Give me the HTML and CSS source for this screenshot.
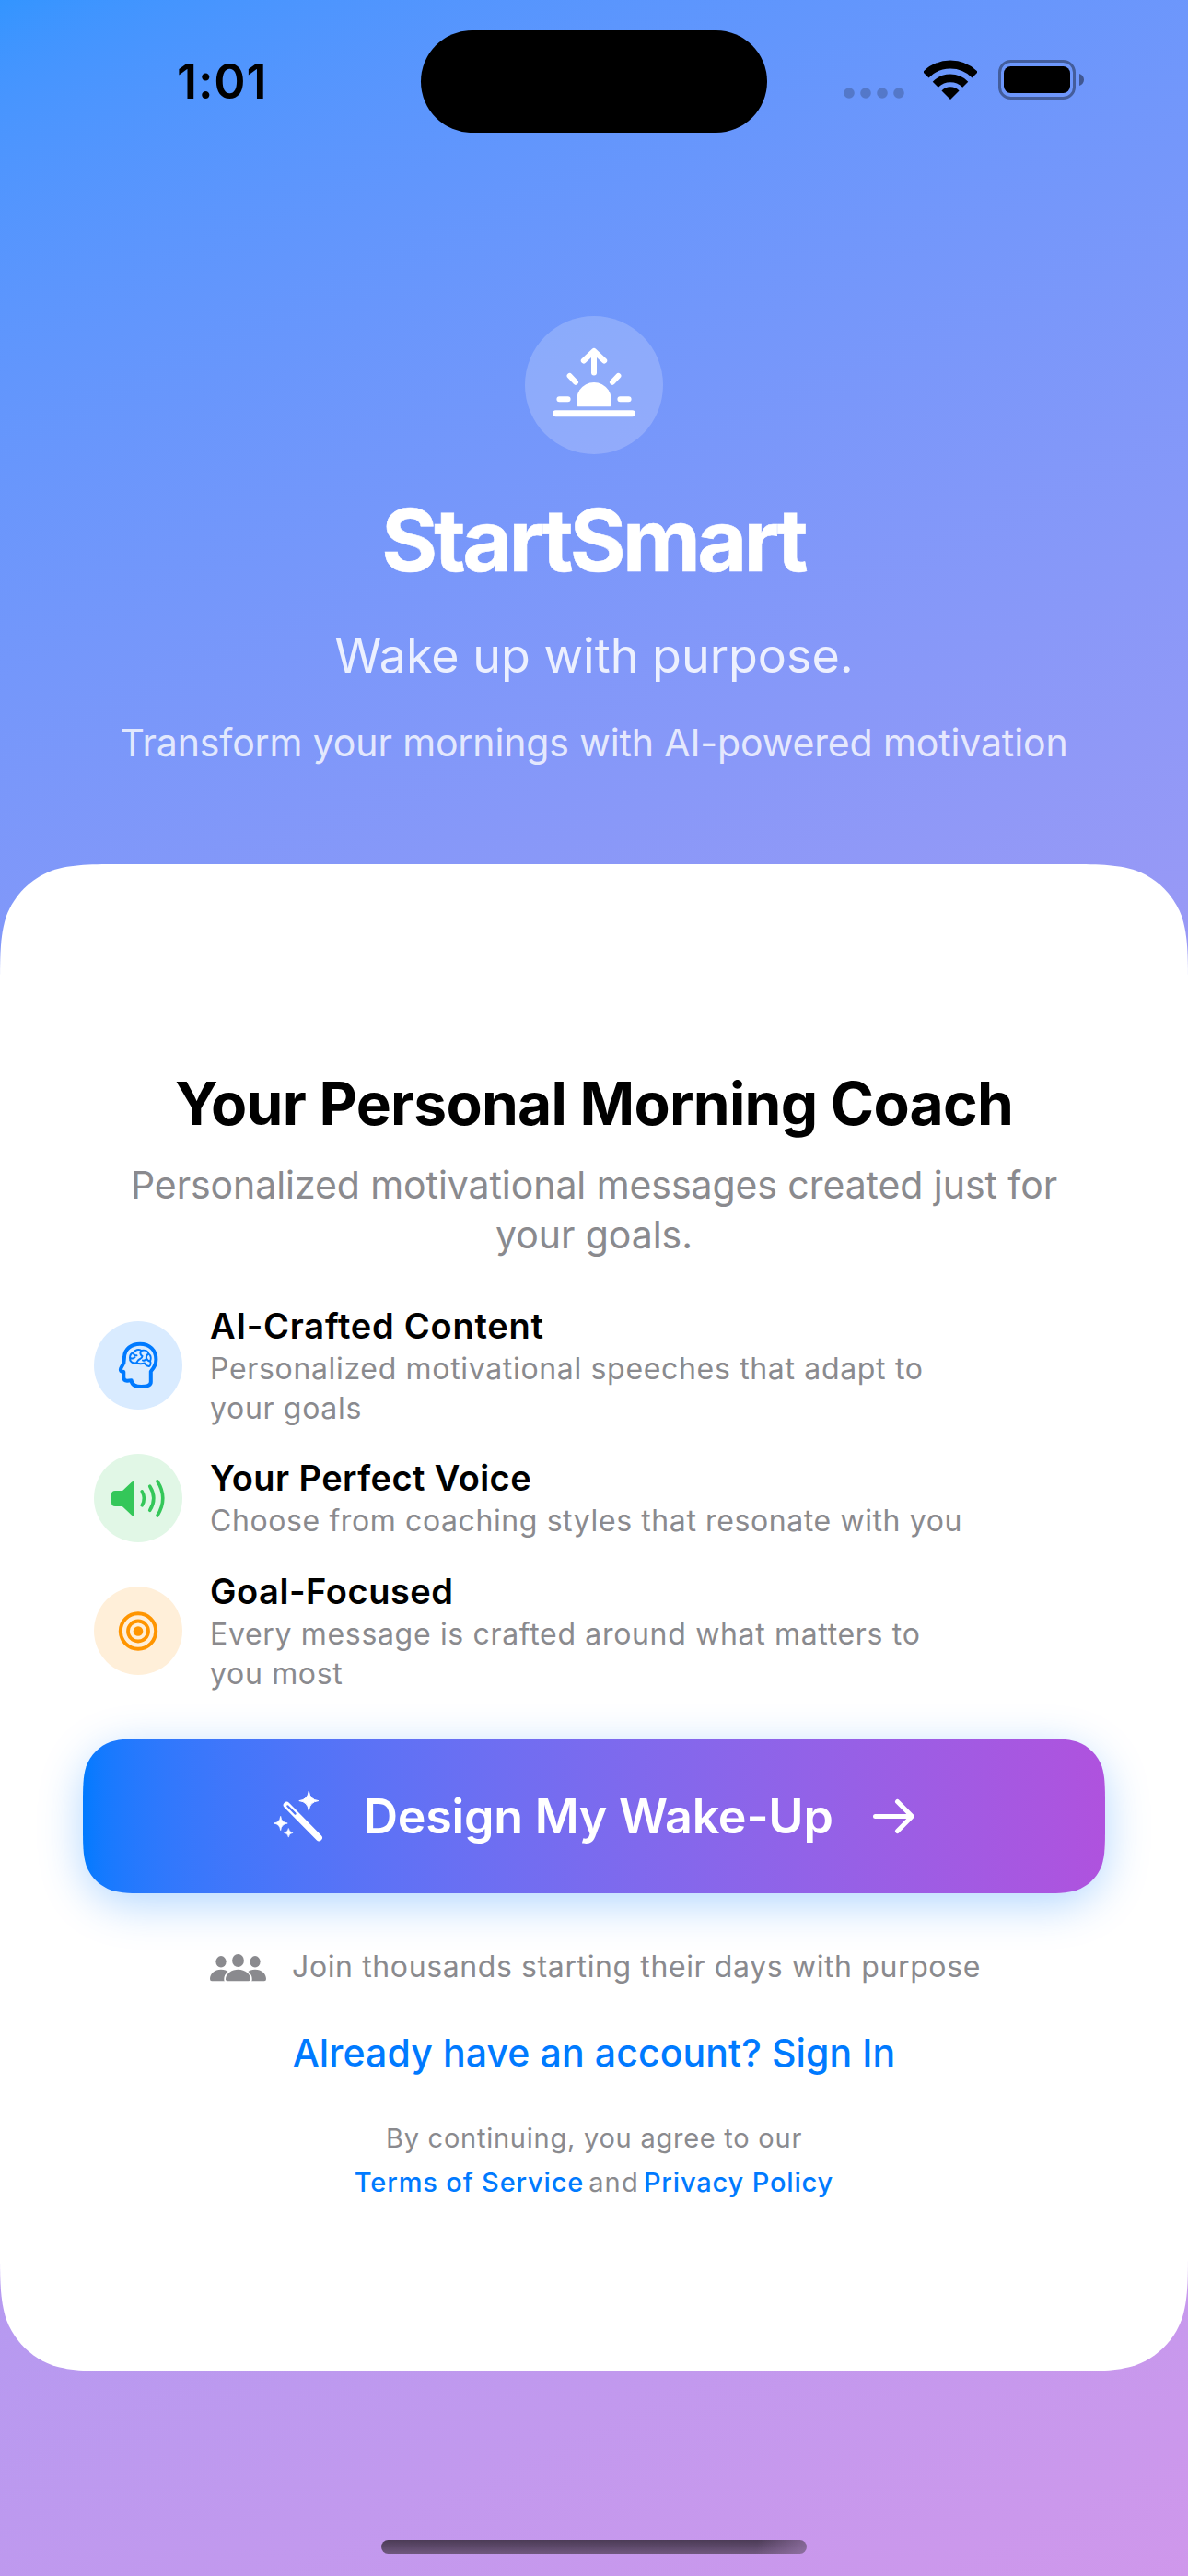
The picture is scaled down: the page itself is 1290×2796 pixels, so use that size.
FILE: index.html
```html
<!DOCTYPE html>
<html lang="en">
<head>
<meta charset="utf-8">
<title>StartSmart</title>
<link rel="stylesheet" href="styles.css">
</head>
<body>
<div class="screen">
  <header class="status">
    <div class="status-time">1:01</div>
    <div class="island"></div>
    <div class="status-icons">
      <svg class="dots" width="66" height="12" viewBox="0 0 66 12" fill="#000" fill-opacity=".2"><circle cx="6" cy="6" r="5.8"/><circle cx="24" cy="6" r="5.8"/><circle cx="42" cy="6" r="5.8"/><circle cx="60" cy="6" r="5.8"/></svg>
      <svg class="wifi" width="58" height="43" viewBox="0 0 58 43">
        <clipPath id="fan"><path d="M29 43L-2 12V-2H60V12Z"/></clipPath>
        <g clip-path="url(#fan)" fill="none" stroke="#000"><circle cx="29" cy="42.5" r="37.4" stroke-width="9"/><circle cx="29" cy="42.5" r="22.6" stroke-width="8.6"/><circle cx="29" cy="42.5" r="6.6" stroke-width="13.2"/></g>
      </svg>
      <svg class="battery" width="94" height="43" viewBox="0 0 94 43">
        <rect x="1.5" y="1.5" width="81" height="40" rx="12" fill="none" stroke="#000" stroke-opacity=".38" stroke-width="3"/>
        <rect x="6" y="7" width="72" height="29" rx="7.5"/>
        <path d="M88 15c3.200 1 5 3.600 5 6.500s-1.800 5.500-5 6.500z" fill-opacity=".42"/>
      </svg>
    </div>
  </header>

  <section class="hero">
    <div class="logo">
      <svg width="150" height="150" viewBox="0 0 150 150" fill="none" stroke="#fff" stroke-width="6" stroke-linecap="round" stroke-linejoin="round">
        <path d="M75 38.500V61.500M63.800 48.500L75 38L86.200 48.500M48.600 65L55 71.700M101.400 65L95 71.700M37.400 90.300H46.600M103.400 90.300H112.600"/>
        <path d="M33.500 105.800H116.500" stroke-width="7"/>
        <path d="M57.200 98.300A19 19.500 0 1 1 92.800 98.300Z" fill="#fff" stroke="none"/>
      </svg>
    </div>
    <h1 class="brand">StartSmart</h1>
    <p class="tagline">Wake up with purpose.</p>
    <p class="lead">Transform your mornings with AI-powered motivation</p>
  </section>

  <main class="card">
    <h2 class="card-title">Your Personal Morning Coach</h2>
    <p class="card-sub">Personalized motivational messages created just for<br>your goals.</p>

    <ul class="features">
      <li class="feature">
        <div class="badge badge-blue">
          <svg width="96" height="96" viewBox="0 0 96 96" fill="none" stroke="#007aff" stroke-linecap="round" stroke-linejoin="round">
            <path stroke-width="4" d="M33 39C33.300 30.500 40.500 24.700 50 24.700C60.500 24.700 67.400 31.500 67.400 41.500C67.400 47.500 65.500 50.500 61.800 54.500V66C61.800 70 57 71 51.500 71C45 71 41 69.500 40.700 64.300L36 64.700C33.500 64.700 32.300 63.500 32.300 61V55L30.200 54.500C28.800 54 28.600 52.600 29.200 51.200L32.400 45.200Z"/>
            <path stroke-width="2" d="M46 45.300C41.500 46 38.600 43.500 39 39.500C39.200 36.500 40.500 34.800 42.800 34.300C44.500 31 48.500 30 51.500 32C55.500 31 58.500 32.500 59.300 35.300C62 37.500 62.300 41 61 43.500C62 45.500 61.500 48 60 49C57 48.600 55.500 47 55 45.500C52 46.500 48.500 46.300 46 45.300ZM42.800 34.300C43 36.500 44.500 37.600 46.500 37.300M40 40.200C42 41 43.500 40.500 44.500 39.200M51.500 32C49.500 34.500 50.500 37 52.500 38C52.500 40.500 49.500 41 48 42.500L46 45.300M59.300 35.300C57.500 36.500 56.500 38.500 57 40.500C56.800 42 54.500 43 53 42.600M57 40.500C58 42.500 59.500 43.400 61 43.500"/>
          </svg>
        </div>
        <div class="feature-text"><h3>AI-Crafted Content</h3><p>Personalized motivational speeches that adapt to<br>your goals</p></div>
      </li>
      <li class="feature">
        <div class="badge badge-green">
          <svg width="96" height="96" viewBox="0 0 96 96" fill="none" stroke="#34c759" stroke-width="3.600" stroke-linecap="round">
            <path fill="#34c759" stroke="none" d="M23 40H30.200Q31 40 31.600 39.400L40.600 31Q42.300 29.600 43.300 30.300Q44 30.900 44 32.500V64.700Q44 66.500 43.100 67Q42 67.500 40.600 66.300L31.600 57.700Q31 57 30.200 57H23Q19 57 19 53V44Q19 40 23 40Z"/>
            <path d="M52.200 40.800Q56.600 48.200 52.200 55.800M60.700 35.200Q69 48.200 60.700 61.300M68.900 29.800Q80.700 48.200 68.900 67"/>
          </svg>
        </div>
        <div class="feature-text voice"><h3>Your Perfect Voice</h3><p>Choose from coaching styles that resonate with you</p></div>
      </li>
      <li class="feature">
        <div class="badge badge-orange">
          <svg width="96" height="96" viewBox="0 0 96 96" fill="none" stroke="#ff9500">
            <circle cx="48" cy="48.500" r="19.200" stroke-width="4"/><circle cx="48" cy="48.500" r="11" stroke-width="3.800"/><circle cx="48" cy="48.500" r="5.300" fill="#ff9500" stroke="none"/>
          </svg>
        </div>
        <div class="feature-text goal"><h3>Goal-Focused</h3><p>Every message is crafted around what matters to<br>you most</p></div>
      </li>
    </ul>

    <a class="cta" href="#">
      <svg width="54" height="56" viewBox="0 0 54 56">
        <path d="M14.300 16.300L49.300 51.800" stroke="#fff" stroke-width="7.200" stroke-linecap="round"/>
        <path d="M15.300 17.300L23.600 25.600" stroke="#4f74f8" stroke-width="2.200" stroke-linecap="round"/>
        <g fill="#fff">
          <path d="M38.300 1Q39.400 10.600 48.800 11.600Q39.400 12.600 38.300 22.200Q37.200 12.600 27.800 11.600Q37.200 10.600 38.300 1Z" stroke="#fff" stroke-linejoin="round"/>
          <path d="M7.700 28.400Q8.500 35.200 15.200 36Q8.500 36.800 7.700 43.600Q6.900 36.800 .2 36Q6.900 35.200 7.700 28.400Z" stroke="#fff" stroke-width=".8"/>
          <path d="M16.300 41.500Q16.900 45.700 21.100 46.300Q16.900 46.900 16.300 51.100Q15.700 46.900 11.500 46.300Q15.700 45.700 16.300 41.500Z" stroke="#fff" stroke-width=".6"/>
        </g>
      </svg>
      <span>Design My Wake-Up</span>
      <svg width="45" height="40" viewBox="0 0 45 40" fill="none" stroke="#fff" stroke-width="5" stroke-linecap="round" stroke-linejoin="round"><path d="M2.500 20.500H42M26.500 4.500L42.300 20.500L26.500 36.500"/></svg>
    </a>

    <div class="social">
      <svg width="61" height="31" viewBox="0 0 61 31" fill="#8a8a8e">
        <ellipse cx="12" cy="9.300" rx="5.600" ry="6.200"/><ellipse cx="49" cy="9.300" rx="5.600" ry="6.200"/><ellipse cx="30.500" cy="8" rx="6.400" ry="7.100"/>
        <path d="M0 28C0 22.500 5 17.800 12 17.800S24 22.500 24 28Q24 30.200 22 30.200H2Q0 30.200 0 28ZM37 28C37 22.500 42 17.800 49 17.800S61 22.500 61 28Q61 30.200 59 30.200H39Q37 30.200 37 28Z"/>
        <path d="M17 28.200C17 23 22.500 17.800 30.500 17.800S44 23 44 28.200Q44 30.200 42 30.200H19Q17 30.200 17 28.200Z" stroke="#fff" stroke-width="3.500" paint-order="stroke"/>
      </svg>
      <span>Join thousands starting their days with purpose</span>
    </div>

    <a class="signin" href="#">Already have an account? Sign In</a>
    <p class="legal">By continuing, you agree to our</p>
    <div class="legal-links"><a href="#">Terms of Service</a><span>and</span><a href="#">Privacy Policy</a></div>
  </main>

  <div class="home-indicator"></div>
</div>
</body>
</html>
```
FILE: styles.css
```css
* { box-sizing: border-box; margin: 0; padding: 0; }

body { font-family: Inter, "Liberation Sans", sans-serif; background: #fff; }
a { text-decoration: none; }
svg { display: block; flex: none; }

.screen {
  width: 1290px;
  height: 2796px;
  overflow: hidden;
  background: linear-gradient(155.23deg in oklab, rgba(0, 122, 255, .8), rgba(175, 82, 222, .6));
}

/* status bar */
.status {
  display: grid;
  grid-template-columns: 457px 376px 1fr;
  height: 144px;
  padding-top: 33px;
}
.status-time {
  padding-left: 192px;
  font-size: 52px;
  font-weight: 600;
  line-height: 111px;
  letter-spacing: .9px;
}
.island { height: 111px; border-radius: 56px; background: #000; }
.status-icons { display: flex; padding: 32px 0 0 83px; }
.dots { margin: 30px 21px 0 0; }
.wifi { margin-right: 23px; }

/* hero */
.hero {
  display: flex;
  flex-direction: column;
  align-items: center;
  height: 794px;
  padding-top: 199px;
  color: #fff;
}
.logo { border-radius: 50%; background: rgba(255, 255, 255, .2); }
.brand {
  margin-top: 37px;
  font-size: 93px;
  font-weight: 700;
  line-height: 112px;
  letter-spacing: -3.7px;
  padding-right: 2px;
  -webkit-text-stroke: .6px #fff;
}
.tagline {
  margin-top: 38px;
  font-size: 52px;
  line-height: 64px;
  color: rgba(255, 255, 255, .85);
}
.lead {
  margin-top: 37px;
  font-size: 41px;
  line-height: 50px;
  letter-spacing: -.13px;
  color: rgba(255, 255, 255, .8);
}

/* white panel with continuous corners */
.card {
  display: flex;
  flex-direction: column;
  align-items: center;
  height: 1636px;
  padding: 221px 90px 0;
  background: #fff;
  clip-path: path("M137.600 0H1152.400C1192 0 1211.800 0 1233.200 6.700C1256.400 15.200 1274.800 33.600 1283.300 56.800C1290 78.200 1290 98 1290 137.600V1498.400C1290 1538 1290 1557.800 1283.300 1579.200C1274.800 1602.400 1256.400 1620.800 1233.200 1629.300C1211.800 1636 1192 1636 1152.400 1636H137.600C98 1636 78.200 1636 56.800 1629.300C33.600 1620.800 15.200 1602.400 6.700 1579.200C0 1557.800 0 1538 0 1498.400V137.600C0 98 0 78.200 6.700 56.800C15.200 33.600 33.600 15.200 56.800 6.700C78.200 0 98 0 137.600 0Z");
}
.card-title {
  font-size: 64px;
  font-weight: 700;
  line-height: 78px;
  letter-spacing: -.73px;
}
.card-sub {
  margin-top: 22px;
  font-size: 41px;
  line-height: 54px;
  letter-spacing: -.07px;
  text-align: center;
  color: #8a8a8e;
}

.features {
  display: flex;
  flex-direction: column;
  align-self: stretch;
  gap: 30px;
  margin-top: 49px;
  padding-left: 12px;
  list-style: none;
}
.feature { display: flex; align-items: center; gap: 30px; }
.badge { flex: none; border-radius: 50%; }
.badge-blue { background: #d9ebff; }
.badge-green { background: #e1f7e6; }
.badge-orange { background: #ffefd9; }
.feature-text { margin-bottom: -2px; }
.feature-text h3 {
  font-size: 38px;
  font-weight: 600;
  line-height: 46px;
  letter-spacing: .75px;
}
.feature-text p {
  margin-top: 2px;
  font-size: 32px;
  line-height: 43px;
  letter-spacing: .67px;
  white-space: nowrap;
  color: #8a8a8e;
}
.feature-text.voice { margin-bottom: 0; }
.voice h3 { letter-spacing: .42px; }
.voice p { letter-spacing: .6px; }
.goal h3 { letter-spacing: .54px; }

/* call to action */
.cta {
  position: relative;
  z-index: 0;
  display: flex;
  align-items: center;
  justify-content: center;
  align-self: stretch;
  gap: 43px;
  height: 168px;
  margin-top: 51px;
  border-radius: 54px;
  box-shadow: 0 12px 48px rgba(0, 122, 255, .3);
  font-size: 52px;
  font-weight: 600;
  letter-spacing: -.23px;
  color: #fff;
}
.cta::before {
  content: "";
  position: absolute;
  inset: 0;
  z-index: -1;
  background: linear-gradient(90deg in oklab, #007aff, #af52de);
  clip-path: path("M73.400 0H1036.600C1057.700 0 1068.300 0 1079.700 3.600C1092.100 8.100 1101.900 17.900 1106.400 30.300C1110 41.700 1110 52.300 1110 73.400V94.600C1110 115.700 1110 126.300 1106.400 137.700C1101.900 150.100 1092.100 159.900 1079.700 164.400C1068.300 168 1057.700 168 1036.600 168H73.400C52.300 168 41.700 168 30.300 164.400C17.900 159.900 8.100 150.100 3.600 137.700C0 126.300 0 115.700 0 94.600V73.400C0 52.300 0 41.700 3.600 30.300C8.100 17.900 17.900 8.100 30.300 3.600C41.700 0 52.300 0 73.400 0Z");
}

.social {
  display: flex;
  align-items: center;
  gap: 28px;
  margin-top: 58px;
  padding-left: 3px;
  font-size: 32px;
  line-height: 44px;
  letter-spacing: .61px;
  color: #8a8a8e;
}
.signin {
  margin-top: 46px;
  font-size: 41px;
  font-weight: 500;
  line-height: 50px;
  letter-spacing: .11px;
  color: #007aff;
}
.legal {
  margin-top: 50px;
  font-size: 29px;
  line-height: 36px;
  letter-spacing: .75px;
  color: #8a8a8e;
}
.legal-links {
  display: flex;
  gap: 5px;
  margin-top: 12px;
  font-size: 29px;
  line-height: 36px;
  letter-spacing: .84px;
  color: #8a8a8e;
}
.legal-links a { font-weight: 500; color: #007aff; }
.legal-links span { letter-spacing: 1.2px; }

.home-indicator {
  width: 462px;
  height: 15px;
  margin: 183px auto 0;
  border-radius: 8px;
  background:
    linear-gradient(100deg, transparent 88%, rgba(160, 125, 180, .65) 100%),
    linear-gradient(#4b3b56, #70587f);
}
```
